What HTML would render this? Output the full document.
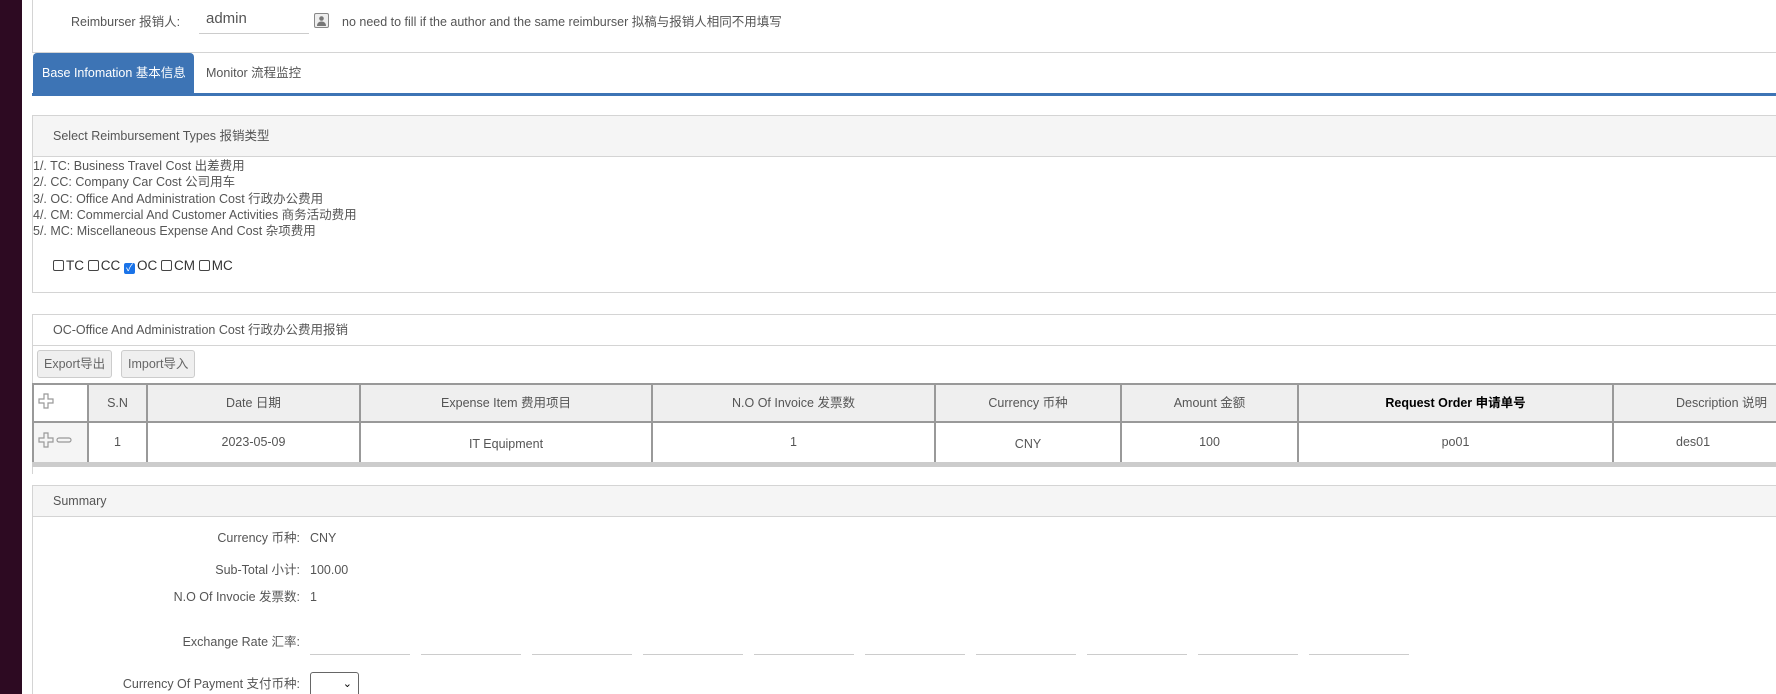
<!DOCTYPE html>
<html><head><meta charset="utf-8"><style>
*{box-sizing:border-box;margin:0;padding:0}
html,body{width:1776px;height:694px;overflow:hidden}
body{background:#fff;font-family:"Liberation Sans","Noto Sans CJK SC",sans-serif;font-size:12.5px;line-height:15px;color:#555;position:relative}
.abs{position:absolute;white-space:nowrap}
.side{position:absolute;left:0;top:0;width:22px;height:694px;background:#2d0a22}
.panel{position:absolute;left:32px;right:-2px;border:1px solid #d4d4d4;background:#fff}
.ph{background:#f5f5f5;border-bottom:1px solid #d4d4d4;padding-left:20px;color:#555}
table{border-collapse:collapse;position:absolute;left:32px;top:383px;table-layout:fixed}
td{border:2px solid #999;text-align:center;color:#555;font-size:12.5px}
.hd td{background:#efefef;height:38px}
.bd td{height:42px;border-bottom:5px solid #ccc}
.btn{position:absolute;top:350px;height:28px;border:1px solid #ccc;border-radius:3px;background:#efefef;line-height:26px;padding:0 6px;color:#666}
.ln{position:absolute;top:654px;width:100px;height:1px;background:#ccc}
.cb{display:inline-block;width:11px;height:11px;border:1px solid #444;border-radius:2px;vertical-align:-1px;margin:0 2px 0 0}
.lbl{position:absolute;right:1476px;text-align:right;white-space:nowrap;line-height:15px}
.val{position:absolute;left:310px;white-space:nowrap;line-height:15px}
</style></head><body>
<div class="side"></div>
<div style="position:absolute;left:32px;top:0;width:1px;height:52px;background:#d4d4d4"></div>
<div class="abs" style="left:71px;top:15px">Reimburser 报销人:</div>
<div class="abs" style="left:206px;top:11px;font-size:15px;color:#555">admin</div>
<div class="abs" style="left:199px;top:33px;width:110px;height:1px;background:#ccc"></div>
<div class="abs" style="left:314px;top:13px;width:15px;height:15px;border:1px solid #888;border-radius:2px;background:#eee"><svg width="13" height="13" viewBox="0 0 13 13"><circle cx="6.5" cy="4.5" r="2.3" fill="#777"/><path d="M2 12c0-3 2-4.5 4.5-4.5S11 9 11 12z" fill="#777"/></svg></div>
<div class="abs" style="left:342px;top:15px">no need to fill if the author and the same reimburser 拟稿与报销人相同不用填写</div>
<div class="abs" style="left:32px;top:52px;right:0;height:1px;background:#d4d4d4"></div>
<div class="abs" style="left:33px;top:53px;width:161px;height:41px;background:#3d74b5;border-radius:4px 4px 0 0;color:#fff;line-height:41px;padding-left:9px">Base Infomation 基本信息</div>
<div class="abs" style="left:206px;top:53px;line-height:41px;color:#555">Monitor 流程监控</div>
<div class="abs" style="left:32px;top:93px;right:0;height:2.5px;background:#3d74b5"></div>

<div class="panel" style="top:115px;height:178px">
<div class="ph" style="height:41px;line-height:40px">Select Reimbursement Types 报销类型</div>
<div style="line-height:16.3px;padding-top:1px">1/. TC: Business Travel Cost 出差费用<br>2/. CC: Company Car Cost 公司用车<br>3/. OC: Office And Administration Cost 行政办公费用<br>4/. CM: Commercial And Customer Activities 商务活动费用<br>5/. MC: Miscellaneous Expense And Cost 杂项费用</div>
<div style="margin:19px 0 0 20px;font-size:13.5px;color:#333"><span class="cb"></span>TC <span class="cb"></span>CC <span class="cb" style="background:#1a73e8;border-color:#1a73e8;color:#fff;font-size:10px;line-height:10px;text-align:center">✓</span>OC <span class="cb"></span>CM <span class="cb"></span>MC</div>
</div>

<div class="panel" style="top:314px;height:160px;border-bottom:none">
<div class="ph" style="height:31px;line-height:30px;background:#fff">OC-Office And Administration Cost 行政办公费用报销</div>
</div>
<div class="btn" style="left:37px">Export导出</div>
<div class="btn" style="left:121px">Import导入</div>
<table style="width:1900px">
<colgroup><col style="width:55px"><col style="width:59px"><col style="width:213px"><col style="width:292px"><col style="width:283px"><col style="width:186px"><col style="width:177px"><col style="width:315px"><col style="width:320px"></colgroup>
<tr class="hd"><td style="background:#fff;text-align:left;padding-left:4px"><svg width="16" height="16" viewBox="0 0 16 16"><path d="M6 1h4v5h5v4h-5v5H6v-5H1V6h5z" fill="none" stroke="#999" stroke-width="1.2"/></svg></td><td>S.N</td><td>Date 日期</td><td>Expense Item 费用项目</td><td>N.O Of Invoice 发票数</td><td>Currency 币种</td><td>Amount 金额</td><td style="color:#000;font-weight:bold">Request Order 申请单号</td><td style="text-align:left;padding-left:62px">Description 说明</td></tr>
<tr class="bd"><td style="background:#f5f5f5;text-align:left;padding-left:4px"><svg width="36" height="16" viewBox="0 0 36 16"><path d="M6 1h4v5h5v4h-5v5H6v-5H1V6h5z" fill="none" stroke="#999" stroke-width="1.2"/><rect x="19" y="6" width="14" height="4" rx="2" fill="none" stroke="#999" stroke-width="1.2"/></svg></td><td>1</td><td>2023-05-09</td><td style="padding-top:4px">IT Equipment</td><td>1</td><td style="padding-top:4px">CNY</td><td>100</td><td>po01</td><td style="text-align:left;padding-left:62px">des01</td></tr>
</table>

<div class="panel" style="top:485px;height:220px;border-bottom:none">
<div class="ph" style="height:31px;line-height:30px">Summary</div>
</div>
<div class="lbl" style="top:531px">Currency 币种:</div><div class="val" style="top:531px">CNY</div>
<div class="lbl" style="top:563px">Sub-Total 小计:</div><div class="val" style="top:563px">100.00</div>
<div class="lbl" style="top:590px">N.O Of Invocie 发票数:</div><div class="val" style="top:590px">1</div>
<div class="lbl" style="top:635px">Exchange Rate 汇率:</div>
<div class="ln" style="left:310px"></div><div class="ln" style="left:421px"></div><div class="ln" style="left:532px"></div><div class="ln" style="left:643px"></div><div class="ln" style="left:754px"></div><div class="ln" style="left:865px"></div><div class="ln" style="left:976px"></div><div class="ln" style="left:1087px"></div><div class="ln" style="left:1198px"></div><div class="ln" style="left:1309px"></div>
<div class="lbl" style="top:677px">Currency Of Payment 支付币种:</div>
<div class="abs" style="left:310px;top:672px;width:49px;height:26px;border:1px solid #666;border-radius:3px;background:#fff"><span style="position:absolute;right:6px;top:4px;font-size:11px;color:#000">⌄</span></div>
</body></html>
